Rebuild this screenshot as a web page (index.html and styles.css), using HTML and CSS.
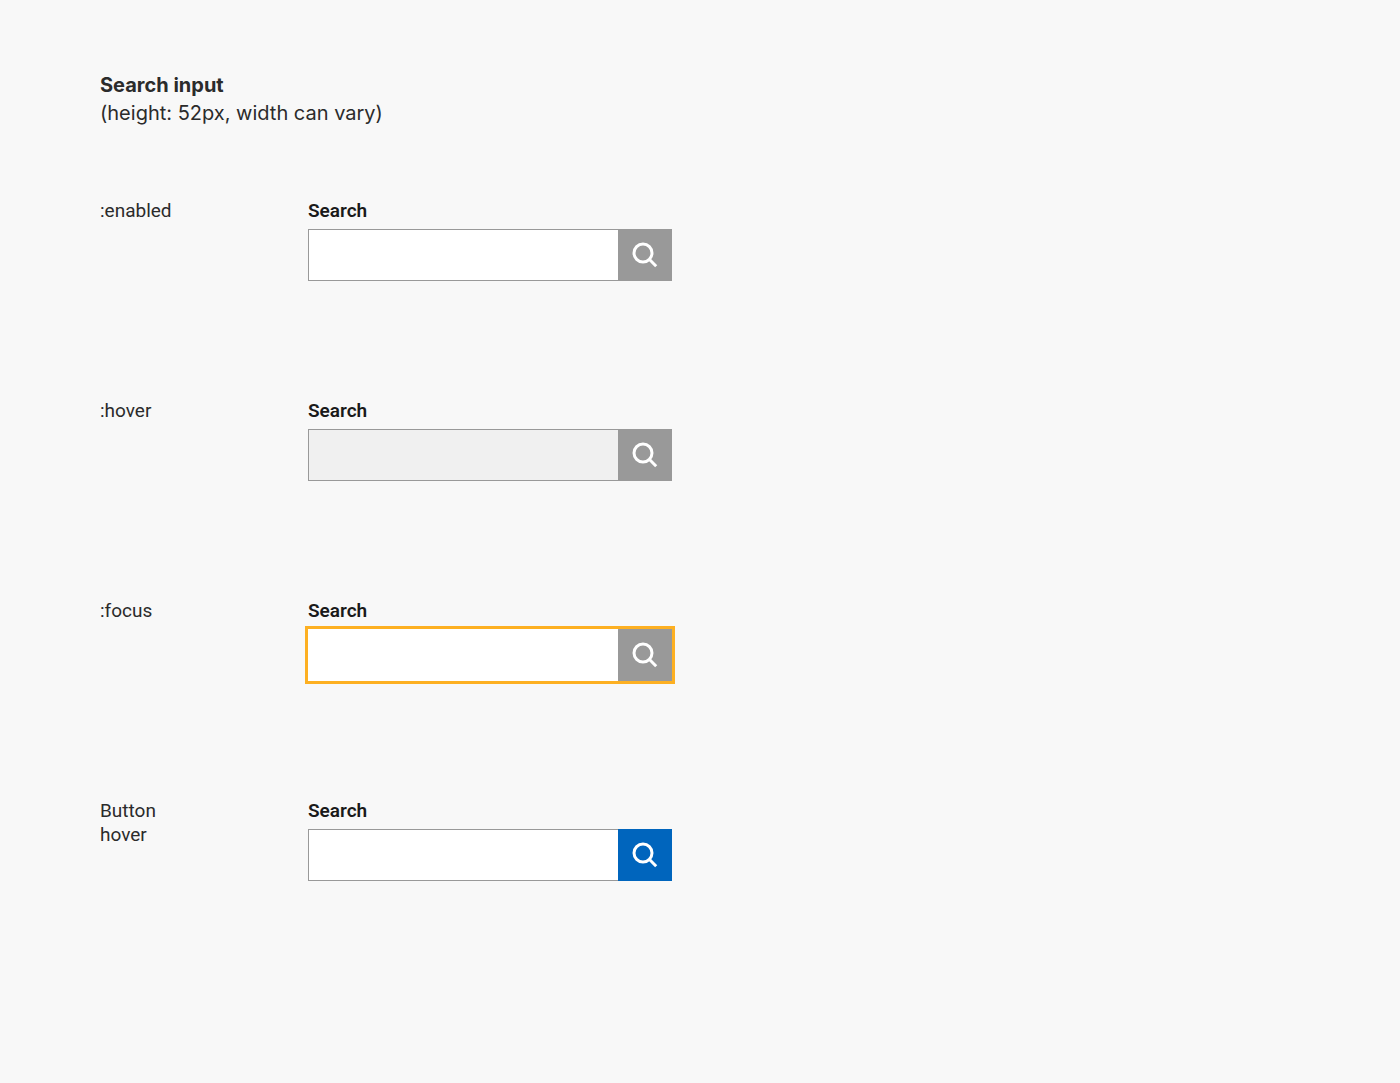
FILE: index.html
```html
<!DOCTYPE html>
<html lang="en">
<head>
<meta charset="utf-8">
<meta name="viewport" content="width=device-width, initial-scale=1">
<title>Search input</title>
<link rel="stylesheet" href="styles.css">
</head>
<body>
<svg class="sprite" aria-hidden="true">
  <symbol id="search-icon" viewBox="0 0 28 28">
    <circle cx="12" cy="12" r="9"/>
    <path d="M18 18L25.2 25.2"/>
  </symbol>
</svg>
<main class="page">
  <header class="intro">
    <h1 class="title">Search input</h1>
    <p class="note">(height: 52px, width can vary)</p>
  </header>
  <div class="states">
    <section class="state">
      <h2 class="state-name">:enabled</h2>
      <form class="search">
        <label class="label" for="search-enabled">Search</label>
        <div class="control">
          <input class="field" id="search-enabled" type="search">
          <button class="submit" type="button" aria-label="Search"><svg class="icon"><use href="#search-icon"/></svg></button>
        </div>
      </form>
    </section>
    <section class="state">
      <h2 class="state-name">:hover</h2>
      <form class="search">
        <label class="label" for="search-hover">Search</label>
        <div class="control">
          <input class="field is-hover" id="search-hover" type="search">
          <button class="submit" type="button" aria-label="Search"><svg class="icon"><use href="#search-icon"/></svg></button>
        </div>
      </form>
    </section>
    <section class="state">
      <h2 class="state-name">:focus</h2>
      <form class="search">
        <label class="label" for="search-focus">Search</label>
        <div class="control is-focus">
          <input class="field" id="search-focus" type="search">
          <button class="submit" type="button" aria-label="Search"><svg class="icon"><use href="#search-icon"/></svg></button>
        </div>
      </form>
    </section>
    <section class="state">
      <h2 class="state-name">Button hover</h2>
      <form class="search">
        <label class="label" for="search-button">Search</label>
        <div class="control">
          <input class="field" id="search-button" type="search">
          <button class="submit is-hover" type="button" aria-label="Search"><svg class="icon"><use href="#search-icon"/></svg></button>
        </div>
      </form>
    </section>
  </div>
</main>
</body>
</html>
```
FILE: styles.css
```css
* {
  box-sizing: border-box;
}

body {
  margin: 0;
  background: #f8f8f8;
  color: #2b2b2b;
  font-family: Roboto, "Liberation Sans", sans-serif;
}

.sprite {
  display: none;
}

.page {
  padding: 71px 100px;
}

.title,
.note {
  margin: 0;
  font-family: Inter, "Liberation Sans", sans-serif;
  font-size: 20px;
  line-height: 28px;
}

.title {
  font-weight: 700;
}

.states {
  display: grid;
  grid-auto-rows: minmax(120px, auto);
  row-gap: 80px;
  margin-top: 72px;
}

.state {
  display: grid;
  grid-template-columns: 80px minmax(0, 364px);
  column-gap: 128px;
  align-items: start;
}

.state-name {
  margin: 0;
  font-size: 19px;
  font-weight: 400;
  line-height: 24px;
}

.search {
  display: flex;
  flex-direction: column;
  gap: 6px;
}

.label {
  color: #1a1a1a;
  font-size: 19px;
  font-weight: 600;
  line-height: 24px;
}

.control {
  display: flex;
  height: 52px;
}

.field {
  flex: 1;
  min-width: 0;
  margin: 0;
  padding: 0 12px;
  border: 1px solid #999;
  border-right: 0;
  border-radius: 0;
  outline: 0;
  background: #fff;
  color: inherit;
  font: inherit;
  font-size: 19px;
  appearance: none;
}

.field:hover,
.field.is-hover {
  background: #f0f0f0;
}

.submit {
  display: flex;
  flex: none;
  align-items: center;
  justify-content: center;
  width: 54px;
  padding: 0;
  border: 0;
  background: #999;
  color: #fff;
  cursor: pointer;
}

.submit:hover,
.submit.is-hover {
  background: #0065bd;
}

.control.is-focus,
.control:focus-within {
  outline: 3px solid #fdb022;
}

.is-focus .field,
.field:focus {
  border-color: #fff;
}

.icon {
  width: 28px;
  height: 28px;
  fill: none;
  stroke: currentColor;
  stroke-width: 3;
}
```
